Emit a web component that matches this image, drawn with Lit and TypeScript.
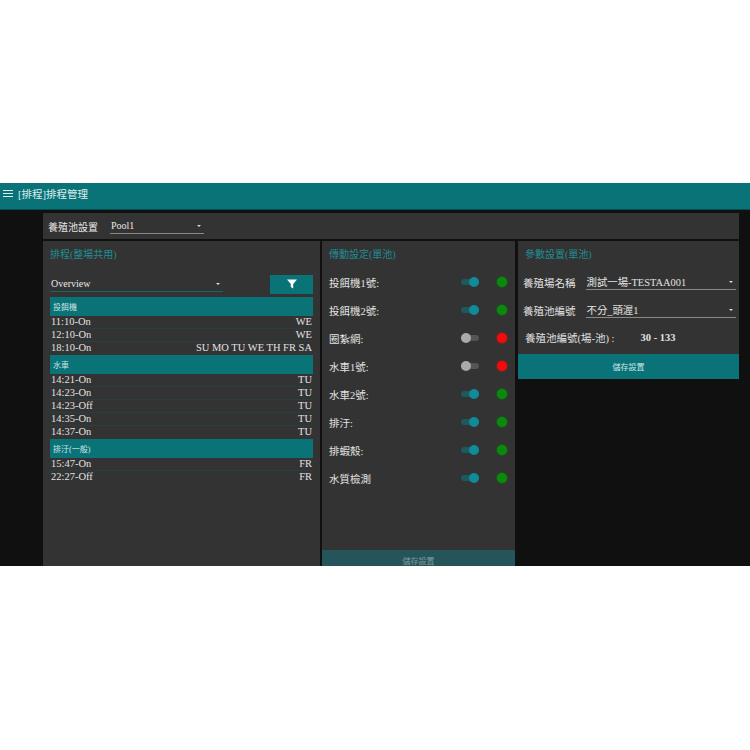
import { LitElement, html, css } from "lit";
import { customElement } from "lit/decorators.js";

const schedule = [
  { title: "投餌機", rows: [["11:10-On", "WE"], ["12:10-On", "WE"], ["18:10-On", "SU MO TU WE TH FR SA"]] },
  { title: "水車", rows: [["14:21-On", "TU"], ["14:23-On", "TU"], ["14:23-Off", "TU"], ["14:35-On", "TU"], ["14:37-On", "TU"]] },
  { title: "排汙(一般)", rows: [["15:47-On", "FR"], ["22:27-Off", "FR"]] },
];
const devices: [string, boolean][] = [
  ["投餌機1號:", true], ["投餌機2號:", true], ["圈紮網:", false], ["水車1號:", false],
  ["水車2號:", true], ["排汙:", true], ["排蝦殼:", true], ["水質檢測", true],
];

@customElement("app-root")
export class AppRoot extends LitElement {
  static styles = css`
    :host { display: block; width: 750px; height: 750px; background: #fff; overflow: hidden;
      font-family: "Liberation Serif", "Noto Sans CJK TC", serif; color: #e8e8e8; font-size: 10.5px; }
    .page { margin-top: 183px; height: 383px; background: #101010; display: flex; flex-direction: column; overflow: hidden; }
    .appbar { height: 27px; flex: none; background: #0a7378; display: flex; align-items: center; gap: 5px; padding: 0 0 5px 3px; box-sizing: border-box; border-bottom: 1px solid #0a4c50; font-size: 10.5px; color: #dfeeee; }
    .menu { width: 10px; height: 7px; border-top: 1.5px solid #dfeeee; border-bottom: 1.5px solid #dfeeee; position: relative; box-sizing: border-box; }
    .menu::after { content: ""; position: absolute; left: 0; right: 0; top: 1.5px; height: 1.5px; background: #dfeeee; }
    .content { flex: 1; min-height: 0; margin: 3px 11px 0 43px; display: flex; flex-direction: column; gap: 2px; }
    .top { height: 26px; flex: none; background: #333; display: flex; align-items: center; padding-left: 5px; gap: 12px; font-size: 10px; }
    .panels { flex: 1; min-height: 0; display: flex; gap: 2px; align-items: flex-start; }
    .panel { background: #333; box-sizing: border-box; height: 100%; display: flex; flex-direction: column; }
    .p1 { width: 277px; padding: 0 7px; }
    .p2 { width: 193px; padding: 0 7px; position: relative; }
    .p3 { width: 221px; margin-left: 1px; height: 138px; padding: 0 5px; position: relative; }
    .p3 .heading { padding-left: 2px; }
    .heading { color: #1f8e94; font-size: 10px; padding-top: 5px; height: 14px; }
    .select { display: flex; align-items: center; justify-content: space-between; box-sizing: border-box; height: 15px; border-bottom: 1px solid #888; padding: 0 3px 0 1px; font-size: 10px; }
    .caret { width: 0; height: 0; border: 2px solid transparent; border-top: 2.5px solid #ddd; border-bottom: 0; }
    .pool { width: 94px; }
    .filter-row { margin-top: 14px; display: flex; align-items: center; justify-content: space-between; height: 20px; }
    .overview { width: 173px; border-bottom-color: #14666a; }
    .filter { width: 43px; height: 19px; background: #0a7378; display: flex; align-items: center; justify-content: center; }
    .group { height: 19px; background: #0a7378; font-size: 8px; color: #cfe4e4; display: flex; align-items: center; padding-left: 3px; }
    .groups { margin-top: 3px; display: flex; flex-direction: column; }
    .rows { display: flex; flex-direction: column; }
    .row { height: 13px; display: flex; justify-content: space-between; align-items: center; padding: 0 1px 1px; line-height: 12px; border-bottom: 1px solid #263f42; box-sizing: border-box; color: #e2e2e2; }
    .row:last-child { border-bottom: 0; }
    .row b { font-weight: 400; }
    .devices { margin-top: 8px; display: flex; flex-direction: column; }
    .device { height: 28px; display: flex; align-items: center; color: #e2e2e2; }
    .name { flex: 1; }
    .switch { width: 18px; height: 6px; border-radius: 3px; position: relative; margin-right: 18px; }
    .switch.on { background: #1c5a60; }
    .switch.off { background: #555; }
    .knob { position: absolute; top: -2px; width: 10px; height: 10px; border-radius: 50%; }
    .on .knob { right: 0; background: #0f8c97; }
    .off .knob { left: 0; background: #aaa; }
    .led { width: 10px; height: 10px; border-radius: 50%; margin-right: 1px; }
    .led.on { background: #0a8a0a; box-shadow: 0 0 2px #0a8a0a; }
    .led.off { background: #f00c0c; box-shadow: 0 0 2px #f00c0c; }
    .p2 .save { position: absolute; left: 0; right: 0; bottom: 0; height: 16px; background: #25555a; color: #84989a; display: flex; align-items: center; justify-content: center; font-size: 8px; padding-top: 5px; box-sizing: border-box; }
    .field { display: flex; align-items: center; gap: 10px; height: 28px; color: #e2e2e2; }
    .field .select { flex: 1; height: 15px; font-size: 10.4px; margin-right: -2px; }
    .fields { margin-top: 8px; }
    .code { display: flex; height: 26px; align-items: center; padding-left: 2px; color: #e2e2e2; }
    .code b { margin-left: 26px; font-size: 10.5px; }
    .p3 .save { position: absolute; left: 0; right: 0; bottom: 0; height: 25px; background: #0a7378; color: #cfe4e4; display: flex; align-items: center; justify-content: center; font-size: 8px; }
  `;

  render() {
    return html`<div class="page">
      <div class="appbar"><span class="menu"></span><span>[排程]排程管理</span></div>
      <div class="content">
        <div class="top"><span>養殖池設置</span>
          <div class="select pool"><span>Pool1</span><i class="caret"></i></div></div>
        <div class="panels">
          <section class="panel p1">
            <div class="heading">排程(整場共用)</div>
            <div class="filter-row">
              <div class="select overview"><span>Overview</span><i class="caret"></i></div>
              <div class="filter"><svg width="10" height="10" viewBox="0 0 10 10"><path d="M0 .5h10L6.2 5v4.5L3.8 8V5z" fill="#fff"/></svg></div>
            </div>
            <div class="groups">
            ${schedule.map((g) => html`<div class="group">${g.title}</div>
              <div class="rows">${g.rows.map((r) => html`<div class="row"><span>${r[0]}</span><b>${r[1]}</b></div>`)}</div>`)}
            </div>
          </section>
          <section class="panel p2">
            <div class="heading">傳動設定(單池)</div>
            <div class="devices">${devices.map(([n, on]) => html`<div class="device">
              <span class="name">${n}</span>
              <span class="switch ${on ? "on" : "off"}"><i class="knob"></i></span>
              <span class="led ${on ? "on" : "off"}"></span></div>`)}</div>
            <div class="save">儲存設置</div>
          </section>
          <section class="panel p3">
            <div class="heading">參數設置(單池)</div>
            <div class="fields">
              <div class="field"><span>養殖場名稱</span><div class="select"><span>測試一場-TESTAA001</span><i class="caret"></i></div></div>
              <div class="field"><span>養殖池編號</span><div class="select"><span>不分_頭渥1</span><i class="caret"></i></div></div>
              <div class="code"><span>養殖池編號(場-池) :</span><b>30 - 133</b></div>
            </div>
            <div class="save">儲存設置</div>
          </section>
        </div>
      </div>
    </div>`;
  }
}
